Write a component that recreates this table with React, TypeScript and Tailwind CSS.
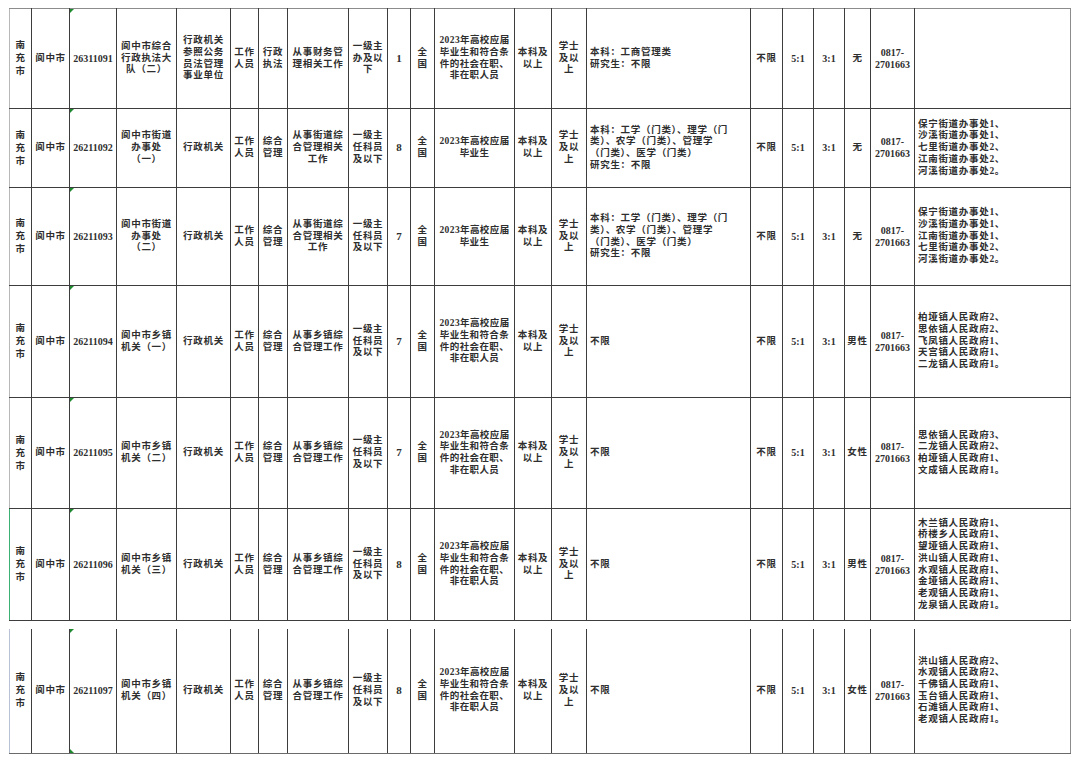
import React from "react";

type Row = {
  h: string;
  left: string;
  code: string;
  unit: string[];
  nature: string[];
  kind: string[];
  duty: string[];
  rank: string[];
  n: string;
  target: string[];
  major: string[];
  sex: string;
  places: string[];
};

const fullTarget = ["2023年高校应届", "毕业生和符合条", "件的社会在职、", "非在职人员"];
const gradTarget = ["2023年高校应届", "毕业生"];
const broadMajor = ["本科：工学（门类）、理学（门", "类）、农学（门类）、管理学", "（门类）、医学（门类）", "研究生：不限"];
const townDuty = ["从事乡镇综", "合管理工作"];
const rankStd = ["一级主", "任科员", "及以下"];

const rows: Row[] = [
  {
    h: "h-[100px]",
    left: "border-l-[#b8b8b8]",
    code: "26311091",
    unit: ["阆中市综合", "行政执法大", "队（二）"],
    nature: ["行政机关", "参照公务", "员法管理", "事业单位"],
    kind: ["行政", "执法"],
    duty: ["从事财务管", "理相关工作"],
    rank: ["一级主", "办及以", "下"],
    n: "1",
    target: fullTarget,
    major: ["本科：工商管理类", "研究生：不限"],
    sex: "无",
    places: [],
  },
  {
    h: "h-[79px]",
    left: "border-l-[#b8b8b8]",
    code: "26211092",
    unit: ["阆中市街道", "办事处", "（一）"],
    nature: ["行政机关"],
    kind: ["综合", "管理"],
    duty: ["从事街道综", "合管理相关", "工作"],
    rank: rankStd,
    n: "8",
    target: gradTarget,
    major: broadMajor,
    sex: "无",
    places: ["保宁街道办事处1、", "沙溪街道办事处1、", "七里街道办事处2、", "江南街道办事处2、", "河溪街道办事处2。"],
  },
  {
    h: "h-[98px]",
    left: "border-l-[#b8b8b8]",
    code: "26211093",
    unit: ["阆中市街道", "办事处", "（二）"],
    nature: ["行政机关"],
    kind: ["综合", "管理"],
    duty: ["从事街道综", "合管理相关", "工作"],
    rank: rankStd,
    n: "7",
    target: gradTarget,
    major: broadMajor,
    sex: "无",
    places: ["保宁街道办事处1、", "沙溪街道办事处1、", "江南街道办事处1、", "七里街道办事处2、", "河溪街道办事处2。"],
  },
  {
    h: "h-[112px]",
    left: "border-l-[#b8b8b8]",
    code: "26211094",
    unit: ["阆中市乡镇", "机关（一）"],
    nature: ["行政机关"],
    kind: ["综合", "管理"],
    duty: townDuty,
    rank: rankStd,
    n: "7",
    target: fullTarget,
    major: ["不限"],
    sex: "男性",
    places: ["柏垭镇人民政府2、", "思依镇人民政府2、", "飞凤镇人民政府1、", "天宫镇人民政府1、", "二龙镇人民政府1。"],
  },
  {
    h: "h-[111px]",
    left: "border-l-[#b8b8b8]",
    code: "26211095",
    unit: ["阆中市乡镇", "机关（二）"],
    nature: ["行政机关"],
    kind: ["综合", "管理"],
    duty: townDuty,
    rank: rankStd,
    n: "7",
    target: fullTarget,
    major: ["不限"],
    sex: "女性",
    places: ["思依镇人民政府3、", "二龙镇人民政府2、", "柏垭镇人民政府1、", "文成镇人民政府1。"],
  },
  {
    h: "h-[112px]",
    left: "border-l-[#3bb273]",
    code: "26211096",
    unit: ["阆中市乡镇", "机关（三）"],
    nature: ["行政机关"],
    kind: ["综合", "管理"],
    duty: townDuty,
    rank: rankStd,
    n: "8",
    target: fullTarget,
    major: ["不限"],
    sex: "男性",
    places: [
      "木兰镇人民政府1、",
      "桥楼乡人民政府1、",
      "望垭镇人民政府1、",
      "洪山镇人民政府1、",
      "水观镇人民政府1、",
      "金垭镇人民政府1、",
      "老观镇人民政府1、",
      "龙泉镇人民政府1。",
    ],
  },
];

const last: Row = {
  h: "h-[124px]",
  left: "border-l-[#b9c1d6]",
  code: "26211097",
  unit: ["阆中市乡镇", "机关（四）"],
  nature: ["行政机关"],
  kind: ["综合", "管理"],
  duty: townDuty,
  rank: rankStd,
  n: "8",
  target: fullTarget,
  major: ["不限"],
  sex: "女性",
  places: ["洪山镇人民政府2、", "水观镇人民政府2、", "千佛镇人民政府1、", "玉台镇人民政府1、", "石滩镇人民政府1、", "老观镇人民政府1。"],
};

const widths = [
  "w-[22px]", "w-[38px]", "w-[47px]", "w-[60px]", "w-[54px]", "w-[28px]", "w-[29px]",
  "w-[61px]", "w-[39px]", "w-[23px]", "w-[24px]", "w-[80px]", "w-[37px]", "w-[35px]",
  "w-[164px]", "w-[32px]", "w-[31px]", "w-[31px]", "w-[26px]", "w-[44px]", "w-[156px]",
];

function Lines({ items }: { items: string[] }) {
  return (
    <>
      {items.map((t, i) => (
        <div key={i}>{t}</div>
      ))}
    </>
  );
}

function Cell({
  children,
  className = "",
}: {
  children?: React.ReactNode;
  className?: string;
}) {
  return (
    <td className={`border border-[#3d3d3d] p-0 text-center align-middle ${className}`}>
      {children}
    </td>
  );
}

// numbers are set in the serif face at a slightly larger size, no tracking
const num = "text-[10px] tracking-normal";

function TableRow({ r, top, bottomMark }: { r: Row; top?: boolean; bottomMark?: boolean }) {
  const t = top ? "border-t-[#8c8c8c]" : "";
  return (
    <tr className={r.h}>
      <Cell className={`${t} ${r.left} leading-[13px]`}>
        <Lines items={["南", "充", "市"]} />
      </Cell>
      <Cell className={t}>阆中市</Cell>
      <Cell className={`${t} ${num} relative`}>
        <div className="absolute left-0 top-0 h-0 w-0 border-t-[4px] border-r-[4px] border-t-[#1e8c2e] border-r-transparent" />
        {bottomMark && (
          <div className="absolute bottom-0 left-0 h-0 w-0 border-b-[4px] border-r-[4px] border-b-[#1e8c2e] border-r-transparent" />
        )}
        {r.code}
      </Cell>
      <Cell className={t}>
        <Lines items={r.unit} />
      </Cell>
      <Cell className={t}>
        <Lines items={r.nature} />
      </Cell>
      <Cell className={t}>
        <Lines items={["工作", "人员"]} />
      </Cell>
      <Cell className={t}>
        <Lines items={r.kind} />
      </Cell>
      <Cell className={t}>
        <Lines items={r.duty} />
      </Cell>
      <Cell className={t}>
        <Lines items={r.rank} />
      </Cell>
      <Cell className={`${t} text-[11px] tracking-normal`}>{r.n}</Cell>
      <Cell className={t}>
        <Lines items={["全", "国"]} />
      </Cell>
      <Cell className={`${t} tracking-[0.4px]`}>
        <Lines items={r.target} />
      </Cell>
      <Cell className={t}>
        <Lines items={["本科及", "以上"]} />
      </Cell>
      <Cell className={t}>
        <Lines items={["学士", "及以", "上"]} />
      </Cell>
      <Cell className={`${t} !text-left pl-[3px]`}>
        <Lines items={r.major} />
      </Cell>
      <Cell className={t}>不限</Cell>
      <Cell className={`${t} ${num}`}>5:1</Cell>
      <Cell className={`${t} ${num}`}>3:1</Cell>
      <Cell className={t}>{r.sex}</Cell>
      <Cell className={`${t} ${num}`}>
        <Lines items={["0817-", "2701663"]} />
      </Cell>
      <Cell className={`${t} border-r-[#8c8c8c] !text-left pl-[3px]`}>
        <Lines items={r.places} />
      </Cell>
    </tr>
  );
}

function Cols() {
  return (
    <colgroup>
      {widths.map((w, i) => (
        <col key={i} className={w} />
      ))}
    </colgroup>
  );
}

export default function App() {
  return (
    <div className="h-[763px] w-[1080px] overflow-hidden bg-white pl-[9px] pt-[8px] font-['Liberation_Serif','Noto_Sans_CJK_SC',serif] text-[9.5px] font-bold leading-[11.7px] tracking-[0.7px] text-[#2e2e2e]">
      <table className="w-[1062px] table-fixed border-collapse">
        <Cols />
        <tbody>
          {rows.map((r, i) => (
            <TableRow key={r.code} r={r} top={i === 0} />
          ))}
        </tbody>
      </table>
      <table className="mt-[8px] w-[1062px] table-fixed border-collapse [&_td]:border-t-0 [&_td]:border-b-[#6a6a6a]">
        <Cols />
        <tbody>
          <TableRow r={last} bottomMark />
        </tbody>
      </table>
    </div>
  );
}
